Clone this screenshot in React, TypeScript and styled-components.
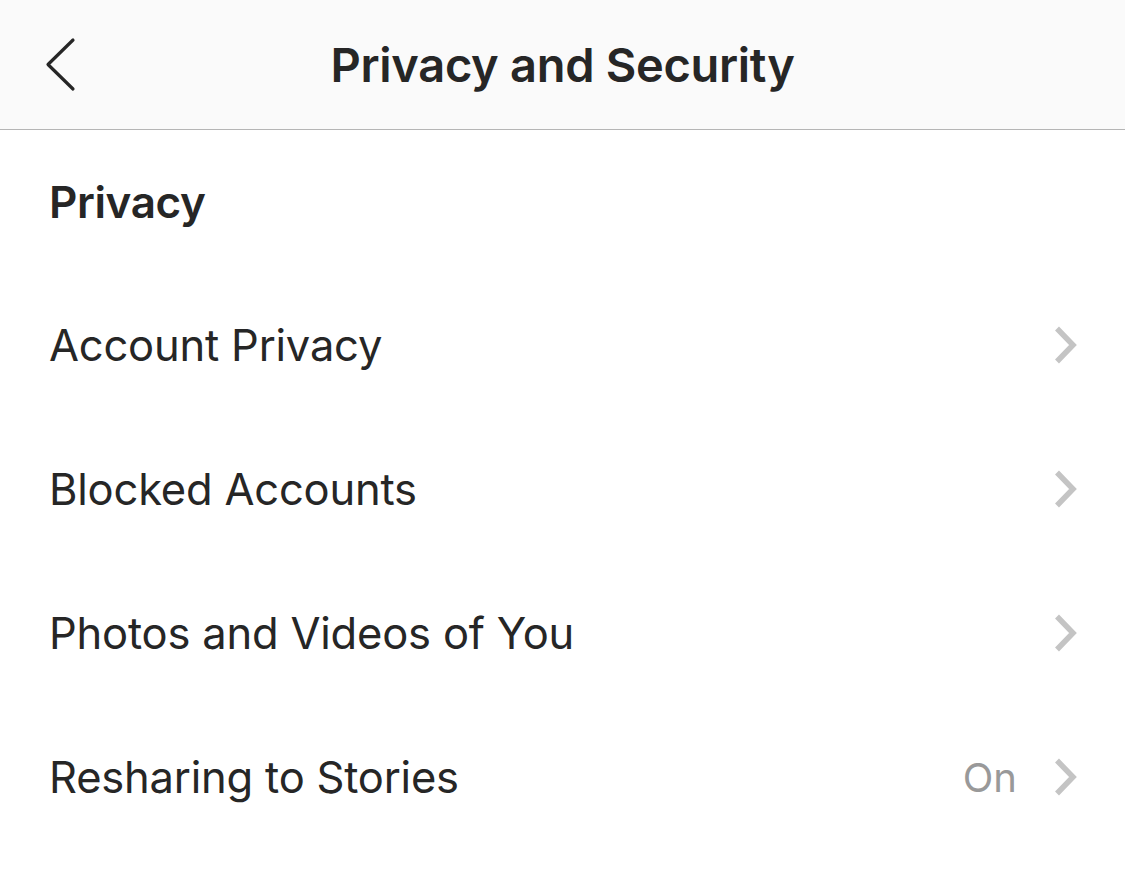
import React from "react";
import styled, { createGlobalStyle } from "styled-components";

const Global = createGlobalStyle`
  html, body { margin: 0; padding: 0; background: #ffffff; }
  body { font-family: Inter, "Noto Sans", "Liberation Sans", sans-serif; color: #262626; }
`;

const Page = styled.div`
  width: 1125px;
  min-height: 874px;
  background: #ffffff;
`;

const Header = styled.header`
  height: 129px;
  background: #fafafa;
  border-bottom: 1px solid #b5b5b5;
  display: grid;
  grid-template-columns: 120px 1fr 120px;
  align-items: center;
`;

const BackButton = styled.div`
  display: flex;
  align-items: center;
  padding-left: 43px;
  height: 100%;
  padding-bottom: 2px;
`;

const Title = styled.h1`
  margin: 0;
  text-align: center;
  font-size: 47px;
  font-weight: 600;
  letter-spacing: -0.3px;
  color: #262626;
`;

const SectionTitle = styled.h2`
  margin: 0;
  height: 143px;
  display: flex;
  align-items: center;
  padding-left: 49px;
  font-size: 44px;
  font-weight: 600;
  letter-spacing: -0.4px;
  color: #262626;
`;

const Row = styled.div`
  height: 144px;
  display: flex;
  align-items: center;
  padding: 0 47px 0 49px;
`;

const Label = styled.span`
  flex: 1;
  font-size: 43.5px;
  font-weight: 400;
  letter-spacing: -0.2px;
  color: #262626;
`;

const Value = styled.span`
  font-size: 40px;
  color: #999999;
  margin-right: 35px;
`;

const Chevron = () => (
  <svg width="26" height="40" viewBox="0 0 26 40">
    <path d="M5 3.5 L21 20 L5 36.5" fill="none" stroke="#c4c4c4" strokeWidth="5.5" />
  </svg>
);

const BackIcon = () => (
  <svg width="34" height="56" viewBox="0 0 34 56">
    <path d="M30 4 L5 28.5 L30 53" fill="none" stroke="#262626" strokeWidth="3.2" strokeLinecap="round" strokeLinejoin="round" />
  </svg>
);

const rows: { label: string; value?: string }[] = [
  { label: "Account Privacy" },
  { label: "Blocked Accounts" },
  { label: "Photos and Videos of You" },
  { label: "Resharing to Stories", value: "On" },
];

export default function App() {
  return (
    <Page>
      <Global />
      <Header>
        <BackButton>
          <BackIcon />
        </BackButton>
        <Title>Privacy and Security</Title>
        <div />
      </Header>
      <SectionTitle>Privacy</SectionTitle>
      {rows.map((r) => (
        <Row key={r.label}>
          <Label>{r.label}</Label>
          {r.value && <Value>{r.value}</Value>}
          <Chevron />
        </Row>
      ))}
    </Page>
  );
}
